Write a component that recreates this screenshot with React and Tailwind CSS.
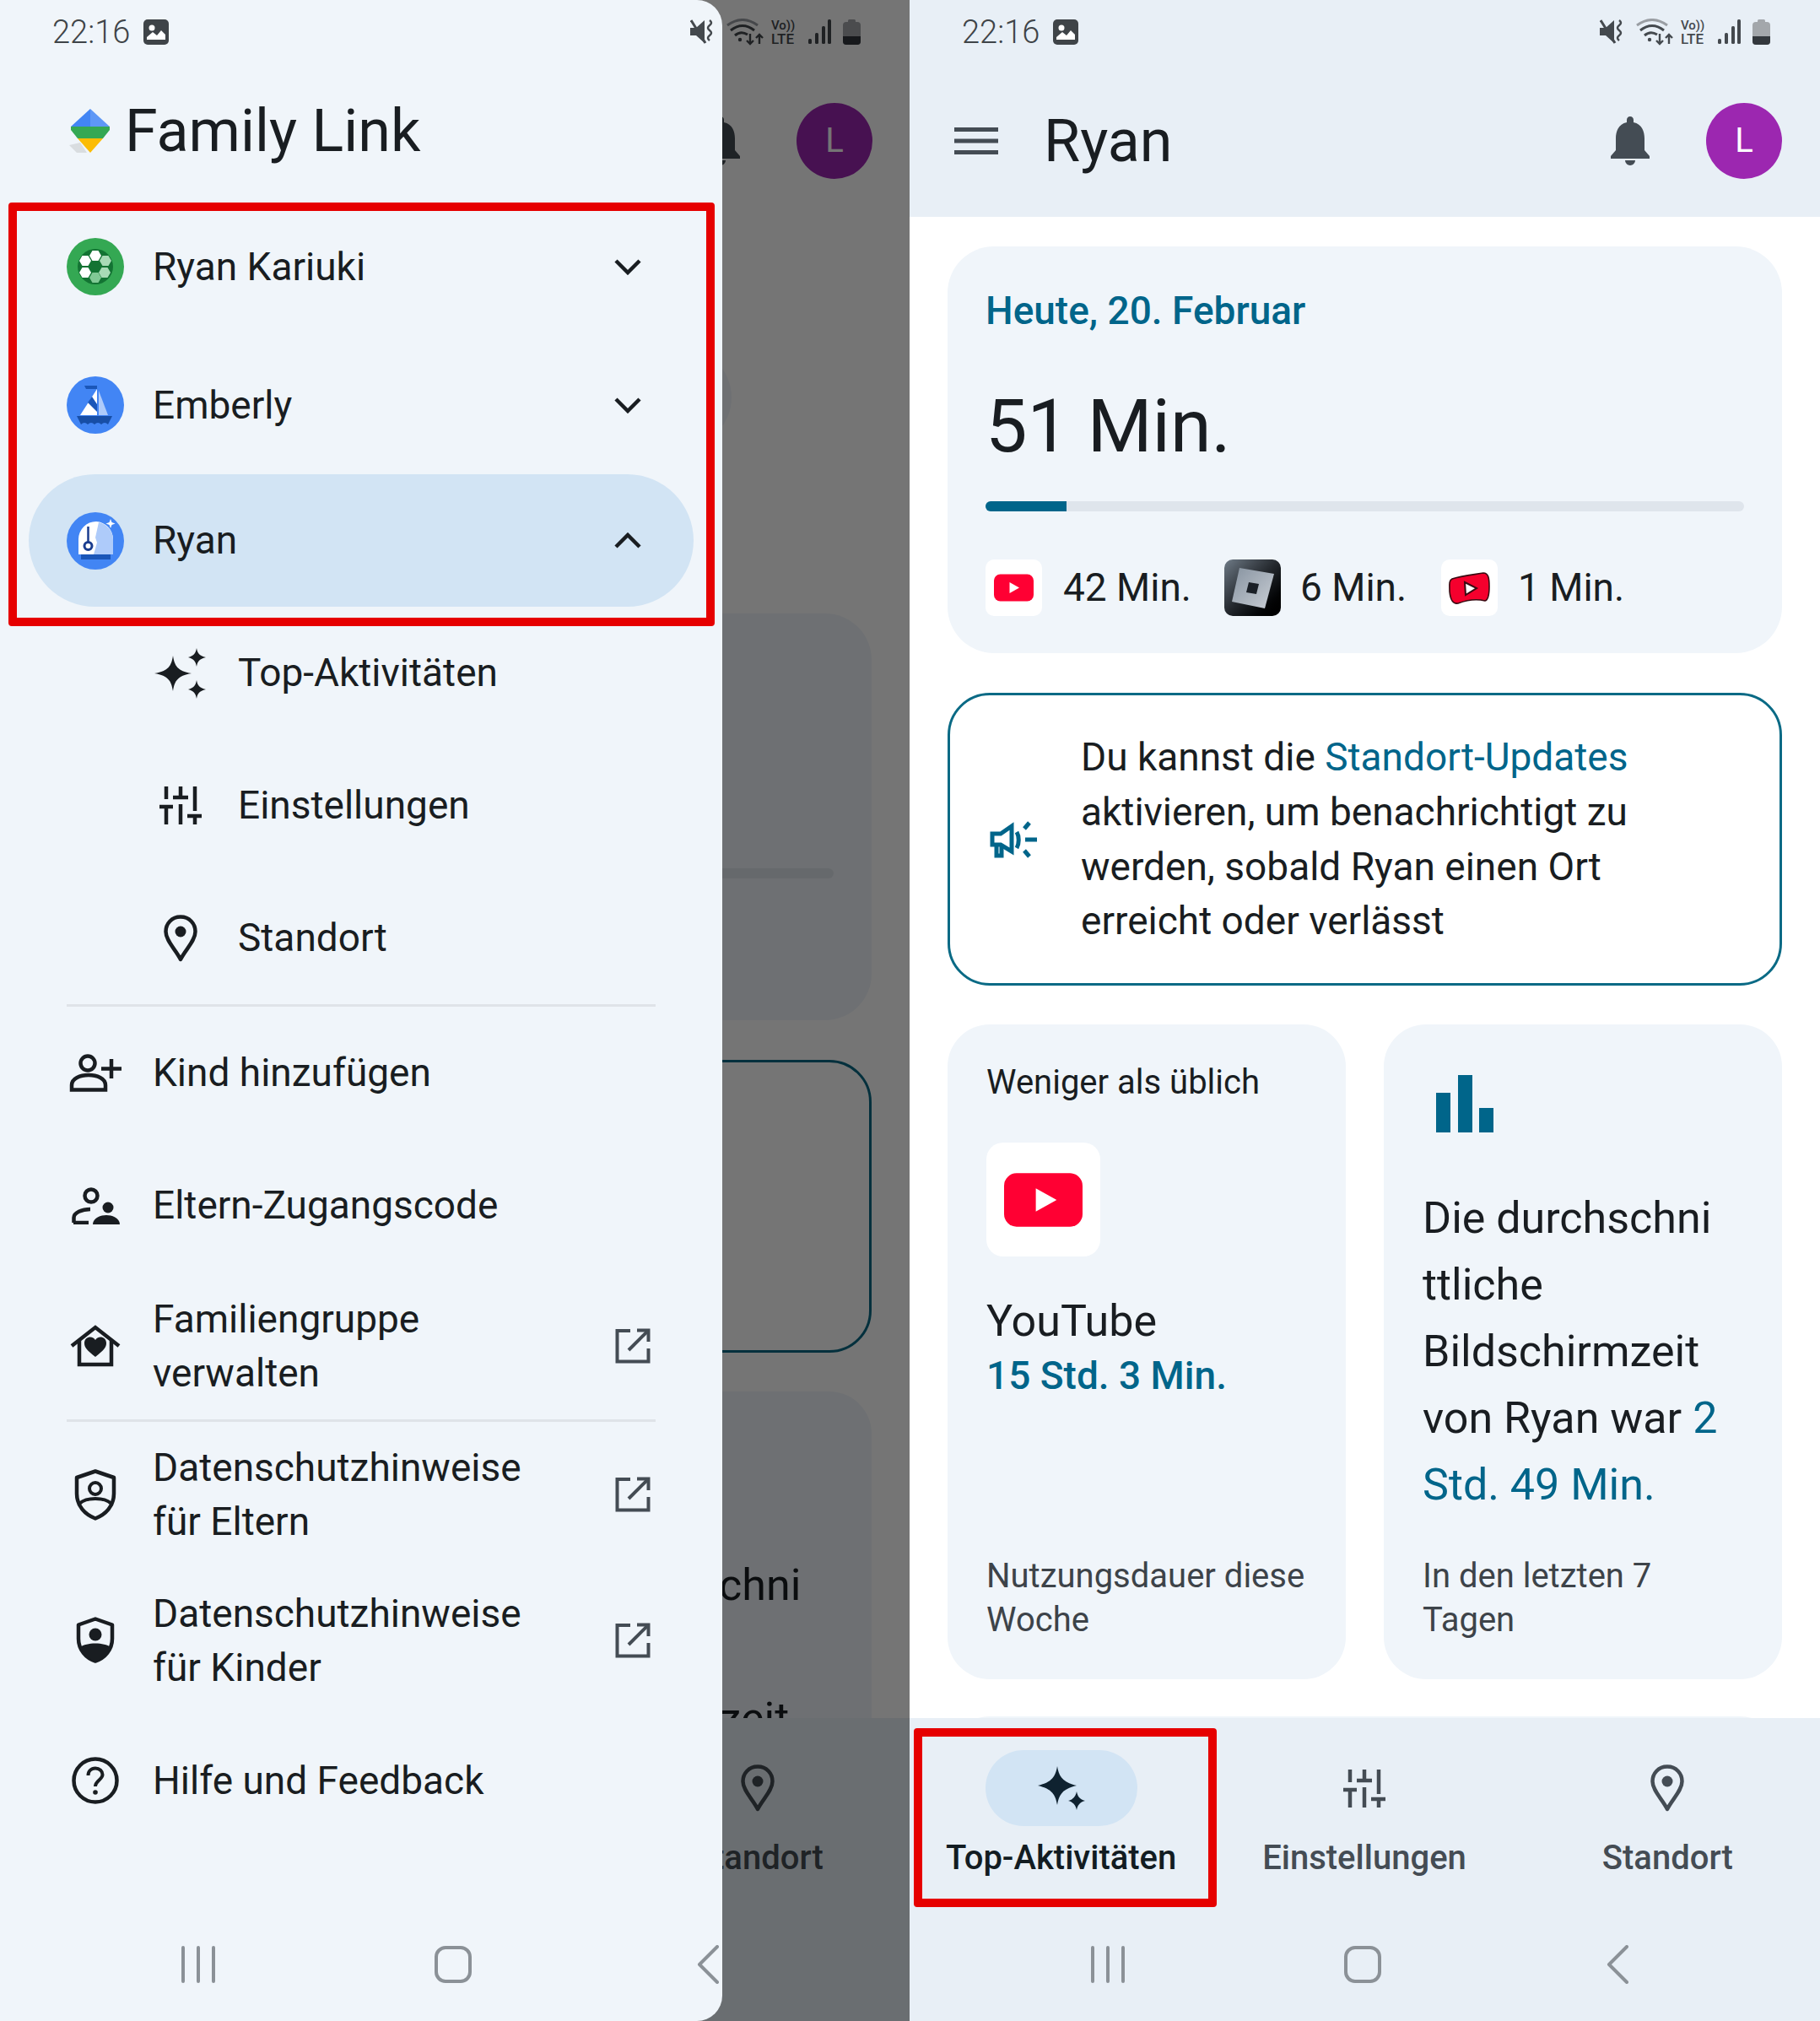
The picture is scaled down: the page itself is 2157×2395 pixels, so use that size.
import React from 'react';

const INK = '#191d21';
const TEAL = '#00658a';

function Gallery() {
  return (
    <svg width="30" height="30" viewBox="0 0 30 30" className="ml-[16px]">
      <rect width="30" height="30" rx="5" fill="#3f4448" />
      <circle cx="10" cy="10" r="3.5" fill="#fff" />
      <path d="M4 24 L4 21 L11 15 L16 19 L21 13 L26 18 L26 24 Z" fill="#fff" />
    </svg>
  );
}

function StatusIcons() {
  return (
    <svg width="202" height="32" viewBox="0 0 202 32" fill="none">
      <path d="M0 11 H7 L17 2 V29 L7 20 H0Z" fill="#44494e" />
      <path d="M1 2 L18 29" stroke="#44494e" strokeWidth="3" />
      <path d="M23 2 q4 3 0 6 q-4 3 0 6 q4 3 0 6 q-4 3 0 6" stroke="#44494e" strokeWidth="2.5" />
      <path d="M44 8 Q62 -5 80 8" stroke="#9a9ea3" strokeWidth="3" />
      <path d="M48 14 Q62 3 76 14" stroke="#44494e" strokeWidth="3" />
      <path d="M53 20 Q60 14 68 19" stroke="#44494e" strokeWidth="3" />
      <circle cx="59" cy="25" r="2.2" fill="#44494e" />
      <path d="M71 18 V30 M67 26 L71 30 L75 26 M82 30 V19 M78 23 L82 19 L86 23" stroke="#44494e" strokeWidth="2.4" />
      <text x="96" y="13" fontFamily="Roboto, sans-serif" fontSize="15" fontWeight="500" fill="#44494e">Vo))</text>
      <text x="96" y="30" fontFamily="Roboto, sans-serif" fontSize="17" fontWeight="500" fill="#44494e">LTE</text>
      <rect x="140" y="24" width="4" height="6" rx="1.5" fill="#44494e" />
      <rect x="148" y="17" width="4" height="13" rx="1.5" fill="#44494e" />
      <rect x="156" y="9" width="4" height="21" rx="1.5" fill="#44494e" />
      <rect x="163" y="1" width="4" height="29" rx="1.5" fill="#44494e" />
      <rect x="181" y="4" width="21" height="27" rx="4" fill="#a3a7ab" />
      <rect x="187" y="1" width="9" height="4" rx="1.5" fill="#a3a7ab" />
      <path d="M181 21 H202 V27 a4 4 0 0 1 -4 4 H185 a4 4 0 0 1 -4 -4Z" fill="#33383d" />
    </svg>
  );
}

function StatusBar() {
  return (
    <div className="flex h-[76px] w-[1078px] shrink-0 items-center justify-between pl-[62px] pr-[58px]">
      <div className="flex items-center">
        <span className="text-[38px] font-light leading-none text-[#3f4448]">22:16</span>
        <Gallery />
      </div>
      <StatusIcons />
    </div>
  );
}

function SystemNav() {
  return (
    <div className="flex h-[134px] w-[1078px] shrink-0 items-center justify-center pr-[4px]">
      <div className="flex w-[302px] justify-center">
        <svg width="42" height="44" viewBox="0 0 42 44" fill="none" stroke="#8b9197" strokeWidth="4" strokeLinecap="round">
          <path d="M3 2 V42 M21 2 V42 M39 2 V42" />
        </svg>
      </div>
      <div className="flex w-[302px] justify-center">
        <div className="h-[44px] w-[44px] rounded-[13px] border-[4px] border-[#8b9197]" />
      </div>
      <div className="flex w-[302px] justify-center">
        <svg width="26" height="46" viewBox="0 0 26 46" fill="none" stroke="#8b9197" strokeWidth="4" strokeLinecap="round" strokeLinejoin="round">
          <path d="M24 2 L3 23 L24 44" />
        </svg>
      </div>
    </div>
  );
}

function Bell() {
  return (
    <svg width="46" height="58" viewBox="0 0 46 58" fill="#444c54">
      <path d="M23 0 c-2.5 0 -4 2 -4 4 v3 C9 9 6 18 6 26 V40 L0 47 V50 H46 V47 L40 40 V26 C40 18 37 9 27 7 V4 C27 2 25.5 0 23 0 Z" />
      <path d="M17 52 h12 c0 3 -3 6 -6 6 s-6 -3 -6 -6z" />
    </svg>
  );
}

function YoutubeLogo({ width, height, tri }) {
  return (
    <svg width={width} height={height} viewBox="0 0 94 64">
      <rect width="94" height="64" rx="15" fill="#ff0033" />
      <path d={tri} fill="#fff" />
    </svg>
  );
}

function RobloxTile() {
  return (
    <div className="h-[67px] w-[67px] rounded-[10px] bg-gradient-to-br from-[#707c88] via-[#23272c] to-black">
      <svg width="67" height="67" viewBox="0 0 67 67">
        <defs>
          <linearGradient id="rbx" x1="0" y1="0" x2="1" y2="1">
            <stop offset="0" stopColor="#8793a0" />
            <stop offset="1" stopColor="#c9ced5" />
          </linearGradient>
        </defs>
        <path d="M18 10 L59 17 L48 58 L9 50 Z" fill="url(#rbx)" />
        <path d="M29 27 L41 29 L38 41 L26 39 Z" fill="#1b2027" />
      </svg>
    </div>
  );
}

function KidsTile() {
  return (
    <div className="h-[67px] w-[67px] rounded-[10px] bg-white">
      <svg width="67" height="67" viewBox="0 0 67 67">
        <path d="M13 23 C22 20 38 18 50 16 C56 16 57 22 57 32 C57 40 56 48 52 49 C40 46 28 49 20 52 C14 53 11 48 10 38 C10 30 9 25 13 23Z" fill="#f5002d" stroke="#3a0a12" strokeWidth="1.6" />
        <path d="M28 27 L42 34 L29 42 Z" fill="#fff" stroke="#3a0a12" strokeWidth="2" />
      </svg>
    </div>
  );
}

function Sparkle({ large }) {
  if (large) {
    return (
      <svg width="62" height="60" viewBox="0 0 62 60" fill={INK}>
        <path d="M22 9 C24 21 27 27 44 30 C27 33 24 39 22 51 C20 39 17 33 0 30 C17 27 20 21 22 9Z" />
        <path d="M50 0 C51 6 53 9 61 11 C53 13 51 16 50 22 C49 16 47 13 40 11 C47 9 49 6 50 0Z" />
        <path d="M50 38 C51 44 53 47 61 49 C53 51 51 54 50 60 C49 54 47 51 40 49 C47 47 49 44 50 38Z" />
      </svg>
    );
  }
  return (
    <svg width="56" height="52" viewBox="0 0 56 52" fill="#0f2230">
      <path d="M23 0 C25 12 29 19 46 23 C29 27 25 34 23 46 C21 34 17 27 0 23 C17 19 21 12 23 0Z" />
      <path d="M46 30 C47 35 49 39 56 41 C49 43 47 47 46 52 C45 47 43 43 36 41 C43 39 45 35 46 30Z" />
    </svg>
  );
}

function Sliders({ color }) {
  return (
    <svg width="50" height="45" viewBox="0 0 50 45" fill="none" stroke={color} strokeWidth="4.5">
      <path d="M8 0 V15 M0 24 H16 M8 24 V45" />
      <path d="M25 0 V14 M16 13 H34 M25 21 V45" />
      <path d="M42 0 V29 M33 35 H50 M42 35 V45" />
    </svg>
  );
}

function Pin({ color }) {
  return (
    <svg width="40" height="56" viewBox="0 0 40 56" fill="none">
      <path d="M20 2.5 C9.5 2.5 2.5 10.5 2.5 20 C2.5 31 14 41 20 53 C26 41 37.5 31 37.5 20 C37.5 10.5 30.5 2.5 20 2.5Z" stroke={color} strokeWidth="4.5" strokeLinejoin="round" />
      <circle cx="20" cy="20" r="6.5" fill={color} />
    </svg>
  );
}

function Tab({ label, active, children }) {
  return (
    <div className="flex flex-col items-center pt-[38px]">
      <div className={`flex h-[90px] w-[180px] items-center justify-center rounded-full ${active ? 'bg-[#d2e4f4]' : ''}`}>
        {children}
      </div>
      <span className={`mt-[14px] text-[40px] font-medium leading-[48px] ${active ? 'text-[#121c22]' : 'text-[#444c54]'}`}>
        {label}
      </span>
    </div>
  );
}

function Screen({ scrolled, wide }) {
  return (
    <div className={`relative flex h-[2395px] flex-col overflow-hidden bg-white ${wide ? 'w-[1079px]' : 'w-[1078px]'}`}>
      <div className={`h-[257px] shrink-0 ${scrolled ? 'bg-white' : 'bg-[#e8eff6]'}`}>
        <StatusBar />
        <div className="flex h-[181px] w-[1078px] items-center pl-[53px] pr-[44px]">
          <svg width="52" height="32" viewBox="0 0 52 32" fill="#444c54">
            <rect width="52" height="5" />
            <rect y="13.5" width="52" height="5" />
            <rect y="27" width="52" height="5" />
          </svg>
          <span className="ml-[54px] text-[70px] leading-none" style={{ color: INK }}>Ryan</span>
          <div className="ml-auto mr-[67px]">
            <Bell />
          </div>
          <div className="flex h-[90px] w-[90px] items-center justify-center rounded-full bg-[#9c27b0] text-[40px] text-white">L</div>
        </div>
      </div>

      <div className="min-h-0 flex-1 overflow-hidden px-[45px]">
        {scrolled ? (
          <div className="h-[470px] pt-[155px]">
            <div className="h-[118px] w-[822px] rounded-full bg-[#f0f5fa]" />
          </div>
        ) : (
          <div className="h-[35px]" />
        )}

        <div className="h-[482px] rounded-[55px] bg-[#f0f5fa] px-[45px] pt-[50px]">
          <div className="text-[46px] font-medium leading-[52px]" style={{ color: TEAL }}>Heute, 20. Februar</div>
          <div className="mt-[61px] text-[88px] leading-[100px]" style={{ color: INK }}>51 Min.</div>
          <div className="mt-[39px] h-[12px] overflow-hidden rounded-full bg-[#dfe5ec]">
            <div className="h-full w-[96px] bg-[#00658a]" />
          </div>
          <div className="mt-[56px] flex items-center text-[46px]" style={{ color: INK }}>
            <div className="flex h-[67px] w-[67px] items-center justify-center rounded-[10px] bg-white">
              <YoutubeLogo width={47} height={33} tri="M37 19 L60 32 L37 45 Z" />
            </div>
            <span className="ml-[25px] w-[191px]">42 Min.</span>
            <RobloxTile />
            <span className="ml-[23px] w-[167px]">6 Min.</span>
            <KidsTile />
            <span className="ml-[24px]">1 Min.</span>
          </div>
        </div>

        <div className="mt-[47px] flex h-[347px] items-center rounded-[50px] border-[3px] border-[#0a6a85] bg-white pl-[47px]">
          <svg width="57" height="44" viewBox="0 0 57 44" fill="none" stroke={TEAL} strokeWidth="5" className="shrink-0">
            <path d="M3 15 H13 L26 6 V36 L13 28 H3 Z" />
            <path d="M8 28 V41 H14 V29" />
            <path d="M32 13 C35 18 35 27 32 32" />
            <path d="M41 9 L47 2 M42 22 H56 M41 35 L47 42" />
          </svg>
          <div className="ml-[51px] text-[46px] leading-[64.7px]" style={{ color: INK }}>
            Du kannst die <span style={{ color: TEAL }}>Standort-Updates</span>
            <br />
            aktivieren, um benachrichtigt zu
            <br />
            werden, sobald Ryan einen Ort
            <br />
            erreicht oder verlässt
          </div>
        </div>

        <div className="mt-[46px] flex h-[776px] justify-between">
          <div className="flex w-[472px] flex-col rounded-[50px] bg-[#f0f5fa] pb-[44px] pl-[46px] pt-[43px]">
            <div className="text-[40px] leading-[52px]" style={{ color: INK }}>Weniger als üblich</div>
            <div className="mt-[45px] flex h-[135px] w-[135px] items-center justify-center rounded-[20px] bg-white">
              <YoutubeLogo width={93} height={64} tri="M38 18 L63 32 L38 46 Z" />
            </div>
            <div className="mt-[45px] text-[52px] leading-[64px]" style={{ color: INK }}>YouTube</div>
            <div className="text-[46px] font-medium leading-[64px]" style={{ color: TEAL }}>15 Std. 3 Min.</div>
            <div className="mt-auto text-[40px] leading-[52px] text-[#3d4349]">
              Nutzungsdauer diese
              <br />
              Woche
            </div>
          </div>

          <div className="flex w-[472px] flex-col rounded-[50px] bg-[#f0f5fa] pb-[44px] pl-[46px] pt-[60px]">
            <svg width="68" height="68" viewBox="0 0 68 68" fill={TEAL} className="ml-[16px] shrink-0">
              <rect y="21" width="17" height="47" />
              <rect x="26" width="17" height="68" />
              <rect x="51" y="39" width="17" height="29" />
            </svg>
            <div className="mt-[62px] text-[52px] leading-[79px]" style={{ color: INK }}>
              Die durchschni
              <br />
              ttliche
              <br />
              Bildschirmzeit
              <br />
              von Ryan war <span style={{ color: TEAL }}>2</span>
              <br />
              <span style={{ color: TEAL }}>Std. 49 Min.</span>
            </div>
            <div className="mt-auto text-[40px] leading-[52px] text-[#3d4349]">
              In den letzten 7
              <br />
              Tagen
            </div>
          </div>
        </div>

        <div className="mt-[44px] h-[200px] rounded-[50px] bg-[#f0f5fa]" />
      </div>

      <div className="flex h-[359px] shrink-0 flex-col bg-[#e8eff6]">
        <div className="grid h-[225px] w-[1078px] grid-cols-3">
          <Tab label="Top-Aktivitäten" active>
            <Sparkle />
          </Tab>
          <Tab label="Einstellungen">
            <Sliders color="#444c54" />
          </Tab>
          <Tab label="Standort">
            <Pin color="#444c54" />
          </Tab>
        </div>
        <SystemNav />
      </div>
    </div>
  );
}

function KiteLogo() {
  return (
    <svg width="50" height="52" viewBox="0 0 50 52" className="shrink-0">
      <path d="M1 43 L14 40 L22 52 L10 52 Z" fill="#d9dde0" />
      <path d="M26 0 L3 21 H26 Z" fill="#4285f4" />
      <path d="M26 0 L49 21 H26 Z" fill="#5e97f6" />
      <path d="M3 21 H49 V25 L41 35 H11 L3 25 Z" fill="#34a853" />
      <path d="M11 35 H41 L26 52 Z" fill="#fbbc04" />
    </svg>
  );
}

function SoccerAvatar() {
  const hex = (cx, cy, fill, key) => {
    const r = 7;
    const pts = [0, 60, 120, 180, 240, 300]
      .map((a) => {
        const t = (a * Math.PI) / 180;
        return `${(cx + r * Math.cos(t)).toFixed(1)},${(cy + r * Math.sin(t)).toFixed(1)}`;
      })
      .join(' ');
    return <polygon key={key} points={pts} fill={fill} />;
  };
  return (
    <svg width="68" height="68" viewBox="0 0 68 68" className="shrink-0">
      <circle cx="34" cy="34" r="34" fill="#34a853" />
      <circle cx="34" cy="34" r="21" fill="#137333" />
      {hex(34, 21, '#fff', 'a')}
      {hex(46, 27, '#a8dab5', 'b')}
      {hex(45, 41, '#a8dab5', 'c')}
      {hex(34, 47, '#81c995', 'd')}
      {hex(22, 41, '#fff', 'e')}
      {hex(22, 27, '#fff', 'f')}
    </svg>
  );
}

function BoatAvatar() {
  return (
    <svg width="68" height="68" viewBox="0 0 68 68" className="shrink-0">
      <circle cx="34" cy="34" r="34" fill="#4285f4" />
      <path d="M21 11 H36 V15 L23 15 Z" fill="#1a56b8" />
      <path d="M36 15 L16 46 H36 Z" fill="#fff" />
      <path d="M25 31 L30 24 L36 33 V42 Z" fill="#1a56b8" />
      <path d="M38 17 L49 46 H38 Z" fill="#aecbfa" />
      <path d="M12 47 H54 L49 57 H17 Z" fill="#174ea6" />
      <path d="M17 57 q4 -4 8 0 q4 -4 8 0 q4 -4 8 0 q4 -4 8 0" fill="#4285f4" />
    </svg>
  );
}

function AstroAvatar() {
  return (
    <svg width="68" height="68" viewBox="0 0 68 68" className="shrink-0">
      <circle cx="34" cy="34" r="34" fill="#4285f4" />
      <path d="M14 50 V32 A21 21 0 0 1 35 11 A21 21 0 0 1 55 32 V50 Z" fill="#fff" />
      <path d="M38 12 A21 21 0 0 1 55 32 V50 H32 L36 36 L34 30 Z" fill="#aecbfa" />
      <path d="M25.5 17 V36" stroke="#1a3d8f" strokeWidth="2.5" />
      <circle cx="25.5" cy="40" r="4.5" fill="none" stroke="#1a3d8f" strokeWidth="3" />
      <rect x="17" y="50" width="35" height="6" fill="#1a56b8" />
      <path d="M52 8 l1.5 4 l4 1.5 l-4 1.5 l-1.5 4 l-1.5 -4 l-4 -1.5 l4 -1.5z" fill="#fff" />
    </svg>
  );
}

function Chevron({ up }) {
  return (
    <svg width="32" height="19" viewBox="0 0 32 19" fill="none" stroke={INK} strokeWidth="4.5">
      <path d={up ? 'M2 17 L16 3 L30 17' : 'M2 2 L16 16 L30 2'} />
    </svg>
  );
}

function ExternalLink() {
  return (
    <svg width="42" height="42" viewBox="0 0 42 42" fill="none" stroke="#444c54" strokeWidth="4" className="shrink-0">
      <path d="M18 3 H2.5 V39.5 H39.5 V24" />
      <path d="M16 26 L38 4" />
      <path d="M26 2.5 H39.5 V16" />
    </svg>
  );
}

function PersonAdd() {
  return (
    <svg width="62" height="45" viewBox="0 0 62 45" fill="none" stroke={INK} strokeWidth="4.5">
      <circle cx="22" cy="11" r="8.5" />
      <path d="M3 42.5 V37 C3 29 13 25 23 25 C33 25 43 29 43 37 V42.5 Z" />
      <path d="M38 17.5 H62 M50 6 V29" />
    </svg>
  );
}

function ParentCode() {
  return (
    <svg width="57" height="44" viewBox="0 0 57 44" fill="none">
      <circle cx="23" cy="10" r="7.5" stroke={INK} strokeWidth="4.5" />
      <path d="M2.5 42 V36 C2.5 30 12 26 22 26 M2 42 H20" stroke={INK} strokeWidth="4.5" />
      <circle cx="43" cy="24" r="6.5" fill={INK} />
      <path d="M25 44 C25 36 35 33 41 33 C47 33 57 36 57 44 Z" fill={INK} />
    </svg>
  );
}

function HomeHeart() {
  return (
    <svg width="60" height="50" viewBox="0 0 60 50" fill="none" stroke={INK} strokeWidth="4.5">
      <path d="M2 25 L30 3 L58 25" />
      <path d="M11 19 V47 H49 V19" />
      <path d="M30 38 C20 30 17 27 17 21.5 C17 17 20.5 14.5 24 14.5 C26.5 14.5 28.8 15.8 30 18 C31.2 15.8 33.5 14.5 36 14.5 C39.5 14.5 43 17 43 21.5 C43 27 40 30 30 38Z" fill={INK} stroke="none" />
    </svg>
  );
}

function ShieldParent() {
  return (
    <svg width="50" height="61" viewBox="0 0 50 61" fill="none" stroke={INK} strokeWidth="4.5">
      <path d="M25 2.5 L47 10 V29 C47 44 37 54 25 58.5 C13 54 3 44 3 29 V10 Z" strokeLinejoin="round" />
      <circle cx="25" cy="23" r="7" strokeWidth="4" />
      <path d="M6 41 C14 33 36 33 44 41" strokeWidth="4" />
    </svg>
  );
}

function ShieldChild() {
  return (
    <svg width="46" height="55" viewBox="0 0 46 55" fill="none">
      <path d="M23 2.5 L43 9.5 V26 C43 39 34 49 23 52.5 C12 49 3 39 3 26 V9.5 Z" stroke={INK} strokeWidth="4.5" strokeLinejoin="round" />
      <circle cx="23" cy="21" r="7.5" fill={INK} />
      <path d="M5 36 C12 30 34 30 41 36 C38 44 30 50 23 53 C16 50 8 44 5 36Z" fill={INK} />
    </svg>
  );
}

function Help() {
  return (
    <svg width="56" height="56" viewBox="0 0 56 56" fill="none" stroke={INK} strokeWidth="4.5">
      <circle cx="28" cy="28" r="25.5" />
      <path d="M19.5 22 C19.5 17 23 13.5 28 13.5 C33 13.5 36.5 17 36.5 21 C36.5 27 28 28 28 35" strokeWidth="4" />
      <circle cx="28" cy="42" r="2.8" fill={INK} stroke="none" />
    </svg>
  );
}

function Drawer() {
  const subRows = [
    { label: 'Top-Aktivitäten', icon: <Sparkle large /> },
    { label: 'Einstellungen', icon: <Sliders color={INK} /> },
    { label: 'Standort', icon: <Pin color={INK} /> },
  ];

  return (
    <div className="absolute bottom-0 left-0 top-0 flex w-[856px] flex-col overflow-hidden rounded-r-[30px] bg-[#f0f5fa] text-[46px]" style={{ color: INK }}>
      <StatusBar />
      <div className="flex h-[158px] shrink-0 items-center pl-[81px]">
        <KiteLogo />
        <span className="ml-[17px] text-[70px] leading-none">Family Link</span>
      </div>

      <div className="flex h-[164px] shrink-0 items-center justify-between pl-[79px] pr-[96px]">
        <div className="flex items-center gap-[34px]">
          <SoccerAvatar />
          <span>Ryan Kariuki</span>
        </div>
        <Chevron />
      </div>
      <div className="flex h-[164px] shrink-0 items-center justify-between pl-[79px] pr-[96px]">
        <div className="flex items-center gap-[34px]">
          <BoatAvatar />
          <span>Emberly</span>
        </div>
        <Chevron />
      </div>
      <div className="mx-[34px] flex h-[157px] shrink-0 items-center justify-between rounded-full bg-[#d2e4f4] pl-[45px] pr-[62px]">
        <div className="flex items-center gap-[34px]">
          <AstroAvatar />
          <span>Ryan</span>
        </div>
        <Chevron up />
      </div>

      {subRows.map((row) => (
        <div key={row.label} className="flex h-[157px] shrink-0 items-center pl-[183px]">
          <div className="flex w-[62px] justify-center">{row.icon}</div>
          <span className="ml-[37px]">{row.label}</span>
        </div>
      ))}

      <div className="ml-[79px] h-[3px] w-[698px] shrink-0 bg-[#dfe3e8]" />

      <div className="flex h-[157px] shrink-0 items-center pl-[79px]">
        <div className="flex w-[68px] justify-center"><PersonAdd /></div>
        <span className="ml-[34px]">Kind hinzufügen</span>
      </div>
      <div className="flex h-[157px] shrink-0 items-center pl-[79px]">
        <div className="flex w-[68px] justify-center"><ParentCode /></div>
        <span className="ml-[34px]">Eltern-Zugangscode</span>
      </div>
      <div className="flex h-[175px] shrink-0 items-center justify-between pl-[79px] pr-[85px]">
        <div className="flex items-center">
          <div className="flex w-[68px] justify-center"><HomeHeart /></div>
          <span className="ml-[34px] leading-[64px]">Familiengruppe<br />verwalten</span>
        </div>
        <ExternalLink />
      </div>

      <div className="ml-[79px] h-[3px] w-[698px] shrink-0 bg-[#dfe3e8]" />

      <div className="flex h-[172px] shrink-0 items-center justify-between pl-[79px] pr-[85px]">
        <div className="flex items-center">
          <div className="flex w-[68px] justify-center"><ShieldParent /></div>
          <span className="ml-[34px] leading-[64px]">Datenschutzhinweise<br />für Eltern</span>
        </div>
        <ExternalLink />
      </div>
      <div className="flex h-[173px] shrink-0 items-center justify-between pl-[79px] pr-[85px]">
        <div className="flex items-center">
          <div className="flex w-[68px] justify-center"><ShieldChild /></div>
          <span className="ml-[34px] leading-[64px]">Datenschutzhinweise<br />für Kinder</span>
        </div>
        <ExternalLink />
      </div>
      <div className="flex h-[160px] shrink-0 items-center pl-[79px]">
        <div className="flex w-[68px] justify-center"><Help /></div>
        <span className="ml-[34px]">Hilfe und Feedback</span>
      </div>

      <div className="mt-auto">
        <SystemNav />
      </div>
    </div>
  );
}

export default function App() {
  return (
    <div className="relative flex h-[2395px] w-[2157px] overflow-hidden bg-white [font-family:Roboto,sans-serif]">
      <div className="relative h-[2395px] w-[1078px] shrink-0 overflow-hidden">
        <Screen scrolled />
        <div className="absolute inset-0 bg-black/[0.54]" />
        <Drawer />
        {/* red annotation box round the profiles */}
        <div className="absolute left-[10px] top-[240px] h-[502px] w-[837px] rounded-[4px] border-[10px] border-[#e60000]" />
      </div>
      <Screen wide />
      {/* red annotation box round the active tab */}
      <div className="absolute left-[1083px] top-[2048px] h-[212px] w-[359px] rounded-[4px] border-[10px] border-[#e60000]" />
    </div>
  );
}
